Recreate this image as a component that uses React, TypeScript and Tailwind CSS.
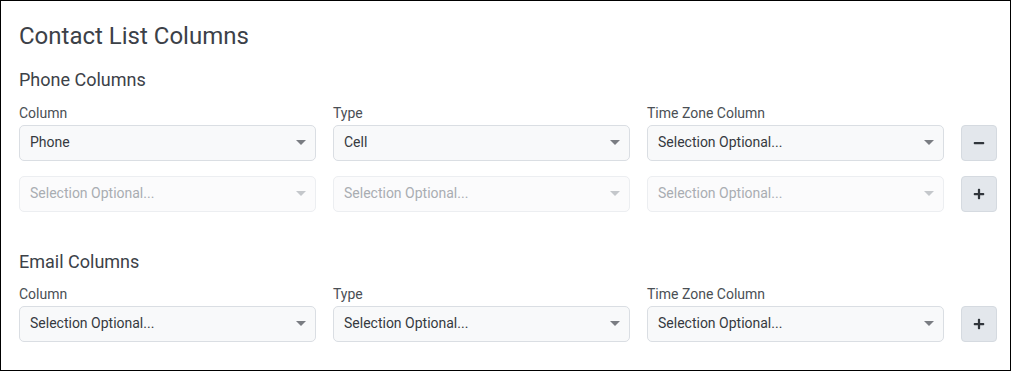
import { FaMinus, FaPlus } from "react-icons/fa";

type SelectProps = { value?: string; disabled?: boolean };

function Caret({ disabled }: { disabled?: boolean }) {
  return (
    <svg width="10" height="5" viewBox="0 0 10 5" className="shrink-0">
      <path d="M0 0 L10 0 L5 5 Z" fill={disabled ? "#c4c7cb" : "#7a7d82"} />
    </svg>
  );
}

function FakeSelect({ value, disabled }: SelectProps) {
  const placeholder = !value;
  return (
    <div
      className={
        "flex h-[36px] w-[297px] items-center justify-between rounded-[5px] border pb-[2px] pl-[10px] pr-[9px] text-[14px] " +
        (disabled
          ? "border-[#eceef1] bg-[#fbfbfc] text-[#a9adb2]"
          : "border-[#dadee3] bg-[#f8f9fa] text-[#363a3f]")
      }
    >
      <span>{placeholder ? "Selection Optional..." : value}</span>
      <Caret disabled={disabled} />
    </div>
  );
}

function Field({ label, value, disabled }: { label?: string; value?: string; disabled?: boolean }) {
  return (
    <div className="flex flex-col">
      {label && <label className="mb-[2px] h-[20px] text-[14px] leading-[20px] text-[#4a4f55]">{label}</label>}
      <FakeSelect value={value} disabled={disabled} />
    </div>
  );
}

function IconButton({ kind }: { kind: "plus" | "minus" }) {
  return (
    <button className="flex h-[36px] w-[36px] items-center justify-center rounded-[4px] border border-[#d5dae0] bg-[#e3e7ec] text-[#30353b]">
      {kind === "plus" ? <FaPlus size={12} /> : <FaMinus size={12} />}
    </button>
  );
}

export default function App() {
  return (
    <div
      className="h-[371px] w-[1011px] border border-black bg-white pl-[18px] pt-[21px]"
      style={{ fontFamily: "Roboto, 'Liberation Sans', sans-serif" }}
    >
      <h1 className="h-[28px] text-[24px] leading-[28px] text-[#3c4148]">Contact List Columns</h1>

      {/* Phone */}
      <h2 className="mt-[18px] h-[24px] text-[18px] leading-[24px] text-[#3c4148]">Phone Columns</h2>
      <div className="mt-[11px] flex items-end gap-[17px]">
        <Field label="Column" value="Phone" />
        <Field label="Type" value="Cell" />
        <Field label="Time Zone Column" />
        <IconButton kind="minus" />
      </div>
      <div className="mt-[15px] flex items-end gap-[17px]">
        <Field disabled />
        <Field disabled />
        <Field disabled />
        <IconButton kind="plus" />
      </div>

      {/* Email */}
      <h2 className="mt-[38px] h-[24px] text-[18px] leading-[24px] text-[#3c4148]">Email Columns</h2>
      <div className="mt-[10px] flex items-end gap-[17px]">
        <Field label="Column" />
        <Field label="Type" />
        <Field label="Time Zone Column" />
        <IconButton kind="plus" />
      </div>
    </div>
  );
}
